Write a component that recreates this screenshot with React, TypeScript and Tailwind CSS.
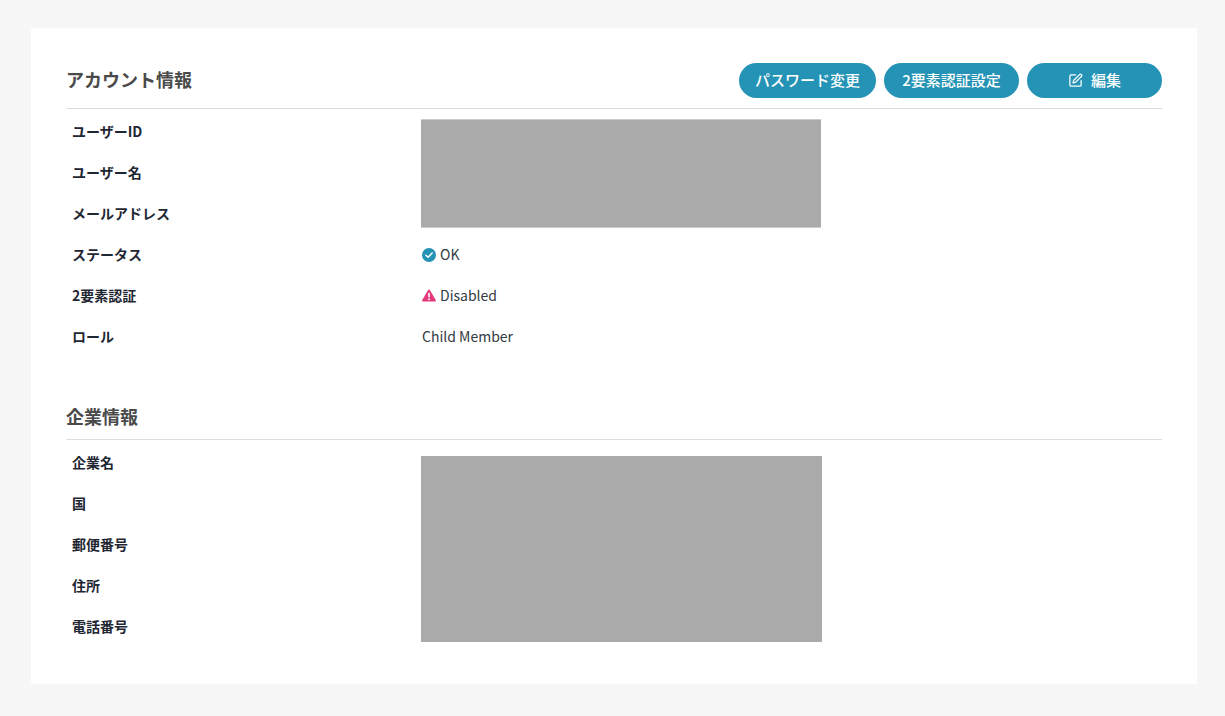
import React from 'react';
import { SquarePen } from 'lucide-react';

const CheckBadge = () => (
  <svg width="14" height="14" viewBox="0 0 14 14" className="shrink-0">
    <circle cx="7" cy="7" r="7" fill="#2593b5" />
    <path d="M3.9 7.2l2.2 2.1 4-4.2" fill="none" stroke="#fff" strokeWidth="1.5" strokeLinecap="round" strokeLinejoin="round" />
  </svg>
);

const WarnBadge = () => (
  <svg width="14" height="13" viewBox="0 0 14 13" className="shrink-0">
    <path d="M7 0.6c.4 0 .7.2.9.5l5.8 10c.4.7-.1 1.5-.9 1.5H1.2c-.8 0-1.3-.8-.9-1.5l5.8-10c.2-.3.5-.5.9-.5z" fill="#e33a7c" />
    <rect x="6.2" y="3.8" width="1.6" height="4.6" rx=".6" fill="#fff" />
    <circle cx="7" cy="10.2" r=".95" fill="#fff" />
  </svg>
);

const Row = ({ label, children }: { label: string; children?: React.ReactNode }) => (
  <div className="flex h-[41px] items-center">
    <div className="w-[356px] px-1.5 text-[14px] font-bold text-[#1f2733]">{label}</div>
    <div className="flex items-center gap-1 text-[14px] text-[#333a42]">{children}</div>
  </div>
);

const Button = ({ children, className }: { children: React.ReactNode; className: string }) => (
  <button className={`flex h-[35px] items-center justify-center rounded-full bg-[#2593b5] text-[15px] font-medium text-white ${className}`}>
    {children}
  </button>
);

export default function App() {
  return (
    <div
      className="min-h-[716px] bg-[#f7f7f7] pt-[28px] pr-[28px] pb-[32px] pl-[31px]"
      style={{ fontFamily: '"Noto Sans CJK JP", "Noto Sans", sans-serif' }}
    >
      <div className="h-[656px] bg-white px-[35px] pt-[35px]">
        {/* Account */}
        <section>
          <div className="flex h-[46px] items-start justify-between border-b border-[#dddddd]">
            <h2 className="mt-[3px] text-[18px] leading-[27px] font-bold text-[#4a4a4a]">アカウント情報</h2>
            <div className="flex gap-2">
              <Button className="w-[137px]">パスワード変更</Button>
              <Button className="w-[135px]">2要素認証設定</Button>
              <Button className="w-[135px] gap-2">
                <SquarePen size={15} strokeWidth={2} />
                編集
              </Button>
            </div>
          </div>
          <div className="relative pt-[2px]">
            <Row label="ユーザーID" />
            <Row label="ユーザー名" />
            <Row label="メールアドレス" />
            <Row label="ステータス">
              <CheckBadge />
              <span>OK</span>
            </Row>
            <Row label="2要素認証">
              <WarnBadge />
              <span>Disabled</span>
            </Row>
            <Row label="ロール">Child Member</Row>
            {/* redacted values */}
            <div className="absolute top-[10px] left-[355px] h-[109px] w-[400px] border-y border-[#cccccc] bg-[#aaaaaa]" />
          </div>
        </section>

        {/* Company */}
        <section className="mt-[46px]">
          <div className="flex h-[37px] items-start border-b border-[#dddddd]">
            <h2 className="text-[18px] leading-[27px] font-bold text-[#4a4a4a]">企業情報</h2>
          </div>
          <div className="relative pt-[2px]">
            <Row label="企業名" />
            <Row label="国" />
            <Row label="郵便番号" />
            <Row label="住所" />
            <Row label="電話番号" />
            <div className="absolute top-[16px] left-[355px] h-[186px] w-[401px] bg-[#aaaaaa]" />
          </div>
        </section>
      </div>
    </div>
  );
}
